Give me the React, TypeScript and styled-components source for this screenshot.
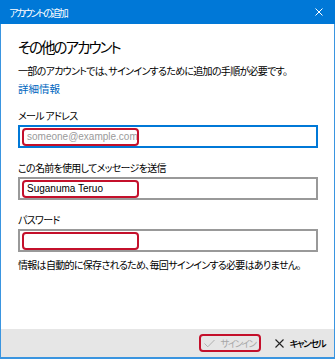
import React from "react";
import styled, { createGlobalStyle } from "styled-components";

const Global = createGlobalStyle`
  html, body { margin: 0; padding: 0; background: #fff; }
  body { font-family: "Noto Sans CJK JP", "Noto Sans", sans-serif; font-feature-settings: "palt"; }
  * { box-sizing: border-box; }
`;

const Window = styled.div`
  width: 335px;
  height: 359px;
  display: flex;
  flex-direction: column;
  border: 1px solid #3a95e0;
  border-top: none;
  border-bottom-width: 2px;
  background: #fff;
`;

const TitleBar = styled.div`
  height: 24px;
  margin: 0 -1px;
  background: #0078d7;
  color: #fff;
  display: flex;
  align-items: center;
  justify-content: space-between;
  padding: 0 12px 0 9px;
  font-size: 10px;
  letter-spacing: -2px;
`;

const Content = styled.div`
  flex: 1;
  padding: 13px 17px 0 17px;
  display: flex;
  flex-direction: column;
`;

const Heading = styled.h1`
  margin: 0;
  font-size: 14.5px;
  line-height: 20px;
  font-weight: 400;
  color: #000;
  letter-spacing: -2px;
`;

const Text = styled.p<{ $mt: number }>`
  margin: ${(p) => p.$mt}px 0 0 0;
  font-size: 10px;
  line-height: 16px;
  color: #000;
  white-space: nowrap;
  letter-spacing: -0.7px;
`;

const Link = styled.a`
  display: block;
  margin-top: 2px;
  font-size: 10.5px;
  line-height: 16px;
  color: #0067c0;
  text-decoration: none;
`;

const Fields = styled.div`
  margin-top: 11px;
  display: flex;
  flex-direction: column;
  gap: 12px;
`;

const Field = styled.div`
  display: flex;
  flex-direction: column;
`;

const Label = styled.label`
  font-size: 10px;
  line-height: 16px;
  margin-bottom: 1px;
  color: #000;
  letter-spacing: -0.7px;
`;

const InputBox = styled.div<{ $focused?: boolean }>`
  position: relative;
  width: 300px;
  height: 23px;
  border: 2px solid ${(p) => (p.$focused ? "#0078d7" : "#999")};
  display: flex;
  align-items: center;
  padding-left: 7px;
  font-family: "Liberation Sans", Arial, sans-serif;
  font-size: 10px;
`;

const Value = styled.span<{ $placeholder?: boolean }>`
  color: ${(p) => (p.$placeholder ? "#9a9a9a" : "#000")};
  line-height: 1;
`;

const Highlight = styled.span<{ $w: number }>`
  position: absolute;
  left: 2px;
  top: 1px;
  width: ${(p) => p.$w}px;
  height: 18px;
  border: 2px solid #c4102b;
  border-radius: 4px;
  pointer-events: none;
`;

const Footer = styled.div`
  height: 28px;
  background: #e6e6e6;
  display: flex;
  align-items: center;
  justify-content: flex-end;
  padding-right: 9px;
  gap: 14px;
`;

const FooterButton = styled.button<{ $disabled?: boolean }>`
  position: relative;
  display: flex;
  align-items: center;
  gap: 5px;
  border: none;
  background: none;
  padding: ${(p) => (p.$disabled ? "0 6px 0 5px" : "0")};
  height: 18px;
  font-family: "Noto Sans CJK JP", sans-serif;
  font-feature-settings: "palt";
  font-size: 9.5px;
  letter-spacing: -1.5px;
  color: ${(p) => (p.$disabled ? "#a6a6a6" : "#000")};
  font-weight: ${(p) => (p.$disabled ? 400 : 500)};
`;

const ButtonHighlight = styled.span`
  position: absolute;
  inset: 0;
  border: 2px solid #c4102b;
  border-radius: 4px;
`;

export default function App() {
  return (
    <>
      <Global />
      <Window>
        <TitleBar>
          <span>アカウントの追加</span>
          <svg width="8" height="8" viewBox="0 0 8 8">
            <path d="M0.5 0.5 L7.5 7.5 M7.5 0.5 L0.5 7.5" stroke="#fff" strokeWidth="1" />
          </svg>
        </TitleBar>
        <Content>
          <Heading>その他のアカウント</Heading>
          <Text $mt={6}>一部のアカウントでは、サインインするために追加の手順が必要です。</Text>
          <Link href="#">詳細情報</Link>
          <Fields>
            <Field>
              <Label>メール アドレス</Label>
              <InputBox $focused>
                <Value $placeholder>someone@example.com</Value>
                <Highlight $w={117} />
              </InputBox>
            </Field>
            <Field>
              <Label>この名前を使用してメッセージを送信</Label>
              <InputBox>
                <Value>Suganuma Teruo</Value>
                <Highlight $w={117} />
              </InputBox>
            </Field>
            <Field>
              <Label>パスワード</Label>
              <InputBox>
                <Highlight $w={117} />
              </InputBox>
            </Field>
          </Fields>
          <Text $mt={5}>情報は自動的に保存されるため、毎回サインインする必要はありません。</Text>
        </Content>
        <Footer>
          <FooterButton $disabled>
            <svg width="11" height="9" viewBox="0 0 11 9">
              <path d="M0.5 4.5 L3.8 7.8 L10.5 1" stroke="#b0b0b0" strokeWidth="1" fill="none" />
            </svg>
            サインイン
            <ButtonHighlight />
          </FooterButton>
          <FooterButton>
            <svg width="9" height="9" viewBox="0 0 9 9">
              <path d="M0.5 0.5 L8.5 8.5 M8.5 0.5 L0.5 8.5" stroke="#222" strokeWidth="1.1" />
            </svg>
            キャンセル
          </FooterButton>
        </Footer>
      </Window>
    </>
  );
}
